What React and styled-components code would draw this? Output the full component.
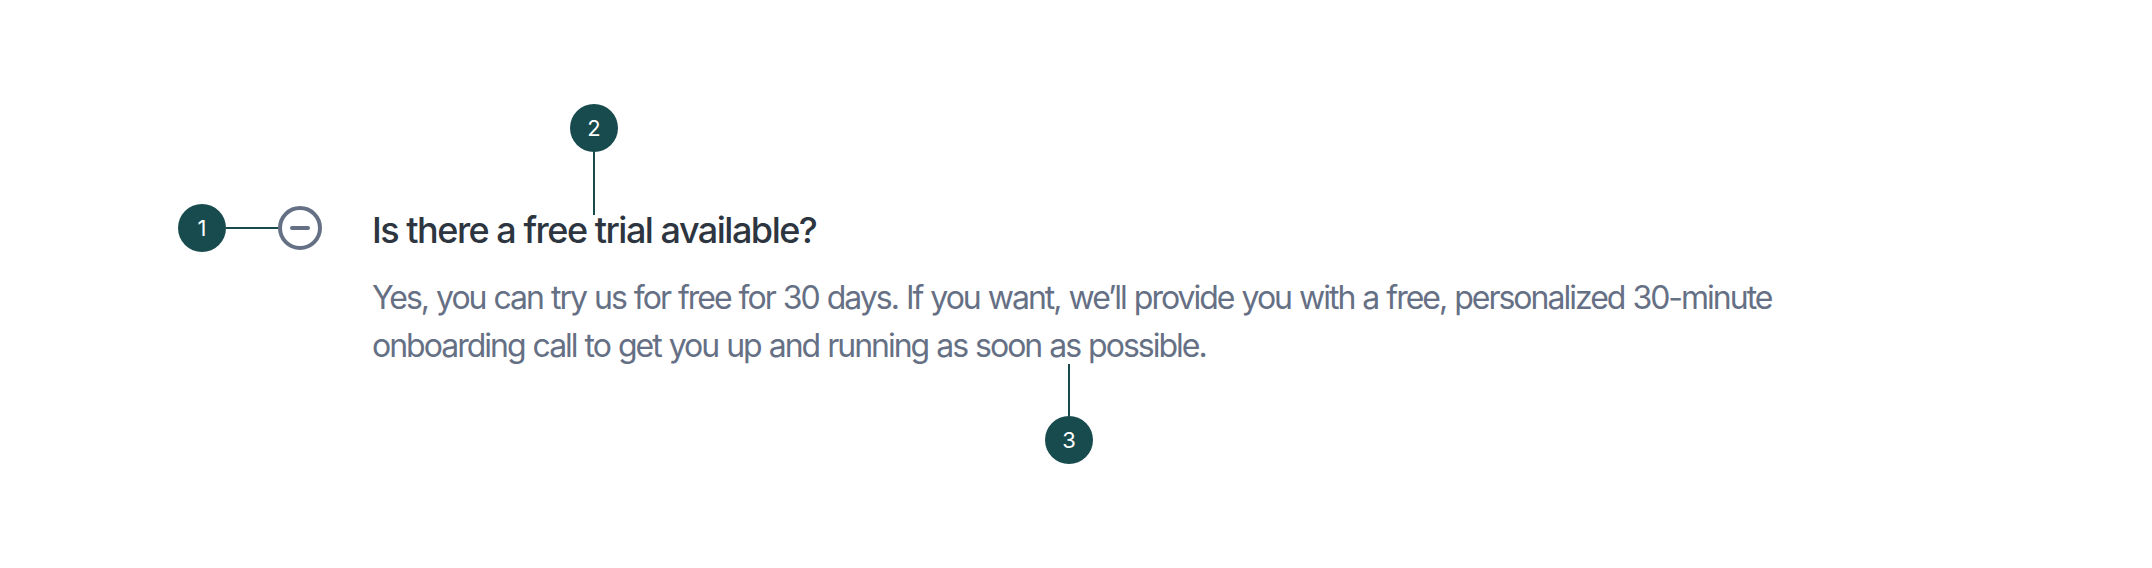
import React from "react";
import styled, { createGlobalStyle } from "styled-components";

const GlobalStyle = createGlobalStyle`
  html, body {
    margin: 0;
    padding: 0;
    background: #ffffff;
  }
  body {
    font-family: Inter, "Noto Sans", sans-serif;
    -webkit-font-smoothing: antialiased;
  }
`;

const Page = styled.div`
  width: 2152px;
  height: 568px;
  box-sizing: border-box;
  padding: 202px 0 0 276px;
`;

const Item = styled.div`
  display: flex;
  align-items: flex-start;
  gap: 48px;
`;

const IconWrap = styled.div`
  position: relative;
  width: 48px;
  height: 48px;
  flex: none;
  margin-top: 2px;
`;

const Content = styled.div`
  display: flex;
  flex-direction: column;
  gap: 16px;
  width: 1440px;
`;

const Question = styled.h3`
  position: relative;
  margin: 0;
  font-size: 36px;
  line-height: 56px;
  font-weight: 500;
  letter-spacing: -1.5px;
  color: #2c3540;
`;

const Answer = styled.p`
  position: relative;
  margin: 0;
  font-size: 32px;
  line-height: 48px;
  font-weight: 400;
  letter-spacing: -2px;
  word-spacing: 1px;
  color: #667085;
`;

const Pin = styled.div`
  position: absolute;
  display: flex;
  align-items: center;
  flex-direction: ${(p) => p.$dir};
`;

const Dot = styled.span`
  width: 48px;
  height: 48px;
  border-radius: 50%;
  background: #184b4d;
  color: #ffffff;
  display: flex;
  align-items: center;
  justify-content: center;
  font-size: 22px;
  font-weight: 400;
  letter-spacing: 0;
  word-spacing: 0;
  line-height: 1;
  flex: none;
`;

const Stem = styled.span`
  background: #184b4d;
  flex: none;
  width: ${(p) => (p.$horizontal ? `${p.$len}px` : "2px")};
  height: ${(p) => (p.$horizontal ? "2px" : `${p.$len}px`)};
`;

const MinusCircle = () => (
  <svg width="48" height="48" viewBox="0 0 24 24" fill="none">
    <circle cx="12" cy="12" r="10" stroke="#667085" strokeWidth="2" />
    <path d="M8 12h8" stroke="#667085" strokeWidth="2" strokeLinecap="round" />
  </svg>
);

export default function App() {
  return (
    <>
      <GlobalStyle />
      <Page>
        <Item>
          <IconWrap>
            <MinusCircle />
            <Pin
              $dir="row"
              style={{ right: "calc(100% - 2px)", top: 0 }}
            >
              <Dot>1</Dot>
              <Stem $horizontal $len={52} />
            </Pin>
          </IconWrap>
          <Content>
            <Question>
              Is there a free trial available?
              <Pin $dir="column" style={{ left: 198, bottom: "calc(100% - 13px)" }}>
                <Dot>2</Dot>
                <Stem $len={63} />
              </Pin>
            </Question>
            <Answer>
              Yes, you can try us for free for 30 days. If you want, we’ll
              provide you with a free, personalized 30-minute onboarding call to
              get you up and running as soon as possible.
              <Pin $dir="column-reverse" style={{ left: 673, top: "calc(100% - 6px)" }}>
                <Dot>3</Dot>
                <Stem $len={52} />
              </Pin>
            </Answer>
          </Content>
        </Item>
      </Page>
    </>
  );
}
